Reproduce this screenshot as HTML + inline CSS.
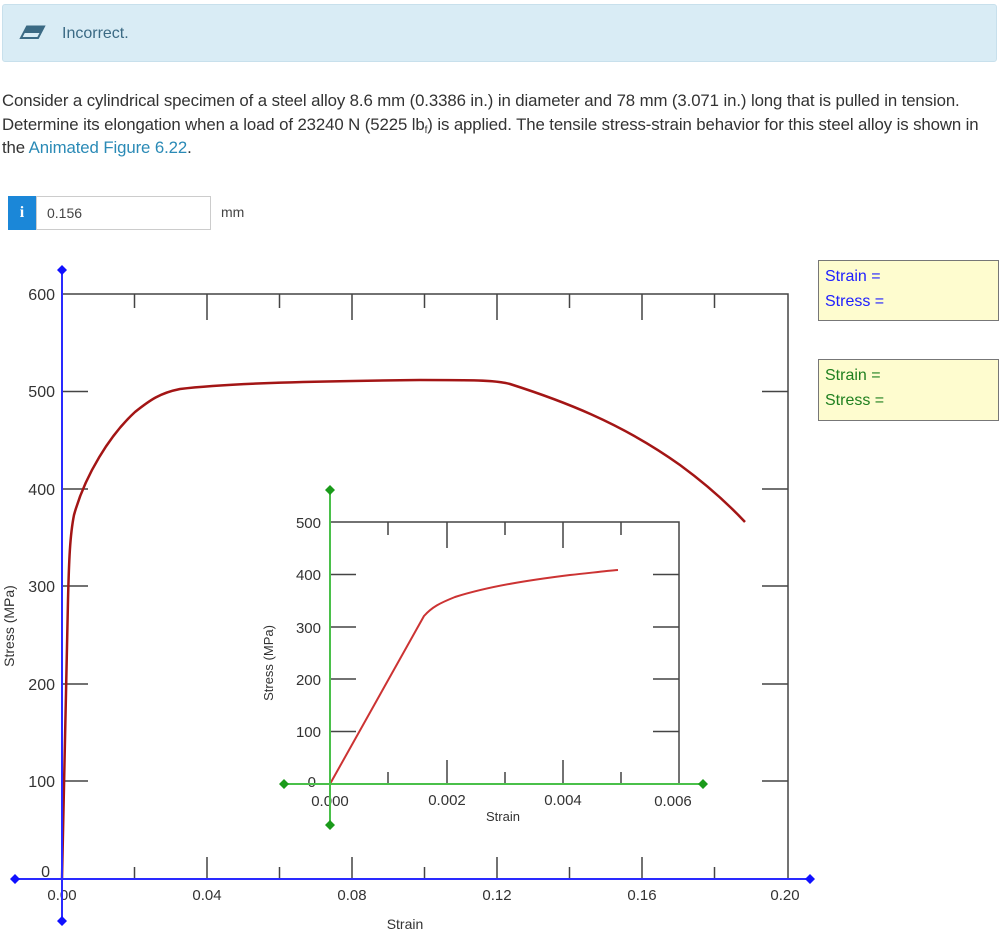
<!DOCTYPE html>
<html><head><meta charset="utf-8"><style>
body{margin:0;width:999px;height:949px;background:#fff;font-family:"Liberation Sans",sans-serif;position:relative;overflow:hidden}
.hdr{position:absolute;left:2px;top:4px;width:995px;height:58px;background:#d9ecf5;border:1px solid #c8e0ec;border-radius:3px;box-sizing:border-box}
.hdr span{position:absolute;left:59px;top:20px;font-size:16px;color:#3b6a84}
.p{position:absolute;left:2px;top:89px;font-size:16.8px;line-height:23.5px;color:#333;width:1010px;white-space:nowrap;letter-spacing:-0.1px}
.p a{color:#2a8ab6;text-decoration:none}
.p sub{font-size:10px;line-height:0;vertical-align:-3px}
.ib{position:absolute;left:8px;top:196px;width:28px;height:34px;background:#1b87d8;color:#fff;font-family:"Liberation Serif",serif;font-weight:bold;font-size:16px;text-align:center;line-height:34px}
.in{position:absolute;left:36px;top:196px;width:175px;height:34px;border:1px solid #ccc;box-sizing:border-box;font-size:14px;color:#444;padding-left:10px;line-height:32px}
.mm{position:absolute;left:221px;top:204px;font-size:14px;color:#444}
.bx{position:absolute;left:818px;width:181px;background:#fefccf;border:1px solid #777;box-sizing:border-box;font-size:16px;line-height:25px;padding:3px 0 0 6px}
</style></head><body>
<div class="hdr"><svg style="position:absolute;left:16px;top:20px" width="28" height="16"><path d="M8 1.5 L25 1.5 L19 13 L2 13 Z" fill="none" stroke="#3b6a84" stroke-width="2"/><path d="M8 1.5 L25 1.5 L21.5 8 L4.5 8 Z" fill="#3b6a84"/></svg><span>Incorrect.</span></div>
<div class="p">Consider a cylindrical specimen of a steel alloy 8.6 mm (0.3386 in.) in diameter and 78 mm (3.071 in.) long that is pulled in tension.<br>Determine its elongation when a load of 23240 N (5225 lb<sub>f</sub>) is applied. The tensile stress-strain behavior for this steel alloy is shown in<br>the <a>Animated Figure 6.22</a>.</div>
<div class="ib">i</div><div class="in">0.156</div><div class="mm">mm</div>
<div class="bx" style="top:260px;height:61px;color:#2020ff">Strain =<br>Stress =</div>
<div class="bx" style="top:359px;height:62px;color:#208020">Strain =<br>Stress =</div>
<svg style="position:absolute;left:0;top:0" width="999" height="949" font-family="Liberation Sans,sans-serif" font-size="16" fill="#333">
<g stroke="#444" stroke-width="1.5" fill="none">
<rect x="62" y="294" width="726" height="585"/>
<path d="M62 391.5h26M62 489h26M62 586h26M62 684h26M62 781h26M762 391.5h26M762 489h26M762 586h26M762 684h26M762 781h26"/>
<path d="M134.5 294v14M207 294v26M279.5 294v14M352 294v26M424.5 294v14M497 294v26M569.5 294v14M642 294v26M714.5 294v14"/>
<path d="M134.5 879v-12M207 879v-22M279.5 879v-12M352 879v-22M424.5 879v-12M497 879v-22M569.5 879v-12M642 879v-22M714.5 879v-12"/>
</g>
<g text-anchor="end"><text x="55" y="300">600</text><text x="55" y="397">500</text><text x="55" y="495">400</text><text x="55" y="592">300</text><text x="55" y="690">200</text><text x="55" y="787">100</text><text x="50" y="877">0</text></g>
<g text-anchor="middle" font-size="15"><text x="62" y="900">0.00</text><text x="207" y="900">0.04</text><text x="352" y="900">0.08</text><text x="497" y="900">0.12</text><text x="642" y="900">0.16</text><text x="785" y="900">0.20</text><text x="405" y="929" font-size="14">Strain</text></g>
<text transform="translate(14,626) rotate(-90)" text-anchor="middle" font-size="14">Stress (MPa)</text>
<path d="M62 879 L68 600 C69 560 70 535 74 515 C85 475 110 435 135 412 C150 400 160 393 180 389 C230 383 320 381 420 380 C470 380 495 380 510 384 C560 400 620 422 680 465 C710 487 730 506 745 522" stroke="#a31515" stroke-width="2.5" fill="none"/>
<g stroke="#2a2aff" stroke-width="2"><path d="M62 270V921M15 879H810"/></g>
<g fill="#1010ff"><path d="M62 265l5 5-5 5-5-5z M62 916l5 5-5 5-5-5z M15 874l5 5-5 5-5-5z M810 874l5 5-5 5-5-5z"/></g>
<rect x="330" y="522" width="349" height="262" fill="#fff" stroke="#444" stroke-width="1.5"/>
<g stroke="#444" stroke-width="1.5" fill="none">
<path d="M330 574.5h26M330 627h26M330 679h26M330 731.5h26M653 574.5h26M653 627h26M653 679h26M653 731.5h26"/>
<path d="M388 522v13M447 522v26M505 522v13M563 522v26M621 522v13M388 784v-12M447 784v-24M505 784v-12M563 784v-24M621 784v-12"/>
</g>
<g text-anchor="end" font-size="15"><text x="321" y="528">500</text><text x="321" y="580">400</text><text x="321" y="633">300</text><text x="321" y="685">200</text><text x="321" y="737">100</text><text x="316" y="787">0</text></g>
<g text-anchor="middle" font-size="15"><text x="330" y="806">0.000</text><text x="447" y="805">0.002</text><text x="563" y="805">0.004</text><text x="673" y="806">0.006</text><text x="503" y="821" font-size="13">Strain</text></g>
<text transform="translate(273,663) rotate(-90)" text-anchor="middle" font-size="13">Stress (MPa)</text>
<path d="M330 784 L424 616 C432 607 440 603 455 597 C490 586 530 580 570 575 C590 573 605 571 618 570" stroke="#cc3333" stroke-width="2" fill="none"/>
<g stroke="#4ac04a" stroke-width="2"><path d="M330 490V825M284 784H703"/></g>
<g fill="#1a9a1a"><path d="M330 485l5 5-5 5-5-5z M330 820l5 5-5 5-5-5z M284 779l5 5-5 5-5-5z M703 779l5 5-5 5-5-5z"/></g>
</svg>
</body></html>
